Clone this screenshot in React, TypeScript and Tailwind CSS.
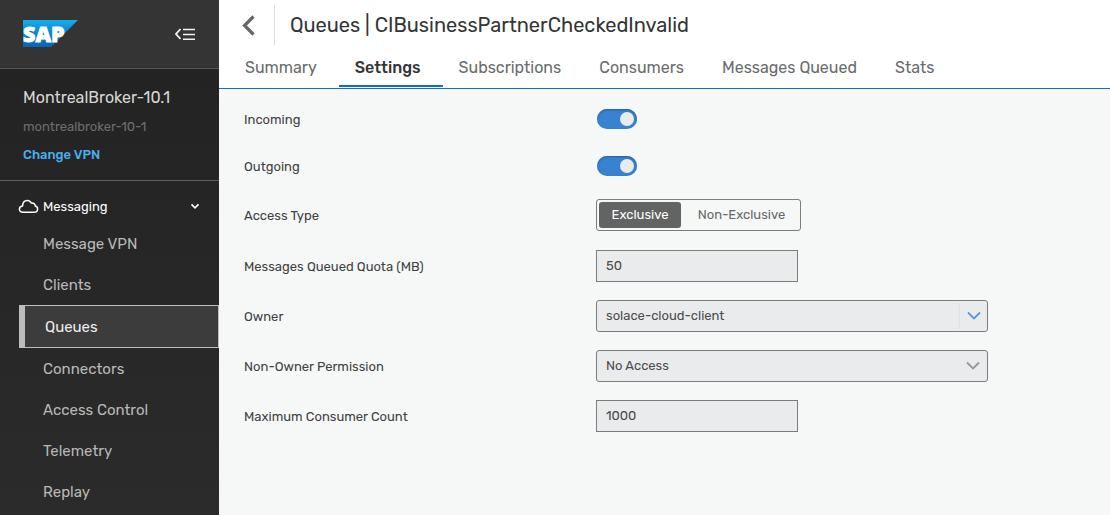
import { useState } from "react";
import type { ReactNode } from "react";

const navItems = ["Message VPN", "Clients", "Queues", "Connectors", "Access Control", "Telemetry", "Replay"];
const tabs = ["Summary", "Settings", "Subscriptions", "Consumers", "Messages Queued", "Stats"];

function SapLogo() {
  return (
    <svg width="55" height="27" viewBox="0 0 55 27" className="overflow-visible" role="img" aria-label="SAP">
      <defs>
        <linearGradient id="sap-blue" x1="0" y1="0" x2="0" y2="1">
          <stop offset="0" stopColor="#12aeec" />
          <stop offset="0.5" stopColor="#0c84d0" />
          <stop offset="1" stopColor="#0a62b4" />
        </linearGradient>
      </defs>
      <path d="M0 0H55L28 27H0Z" fill="url(#sap-blue)" />
      <text x="0" y="21.500" fill="#fff" stroke="#fff" strokeWidth="0.900" fontFamily="'Open Sans', sans-serif" fontWeight="800" fontSize="21.500">
        SAP
      </text>
    </svg>
  );
}

function Sidebar() {
  return (
    <aside className="flex w-[219px] shrink-0 flex-col bg-linear-to-b from-[#222222] to-[#2b2b2b]">
      <div className="flex h-[69px] items-center justify-between border-b border-[#565656] bg-[#343434] pr-6 pb-px pl-[23px]">
        <SapLogo />
        <button type="button" aria-label="Collapse navigation">
          <svg width="20" height="12" viewBox="0 0 20 12" fill="none" stroke="#f2f2f2">
            <path d="M5.500 1 1 6l4.500 5" strokeWidth="1.800" />
            <path d="M8 1.500h12M8 6.500h12M8 11.200h12" strokeWidth="1.600" />
          </svg>
        </button>
      </div>
      <div className="flex h-28 flex-col border-b border-[#606060] pt-[17px] pl-[23px]">
        <h2 className="text-[16px] leading-6 text-[#d6d6d6]">MontrealBroker-10.1</h2>
        <p className="mt-[7px] text-[13px] leading-5 text-[#6e6e6e]">montrealbroker-10-1</p>
        <a href="#vpn" className="mt-2 text-[13px] leading-5 font-medium text-[#46b0f0]">
          Change VPN
        </a>
      </div>
      <nav className="flex flex-col" aria-label="Messaging">
        <button type="button" className="flex h-[42px] items-center pt-2 pr-[19px] pl-[18px] text-[13px] text-white">
          <svg width="21" height="15" viewBox="0 0 21 15" fill="none" stroke="#fff" strokeWidth="1.500">
            <path d="M5 13.200C2.700 13.200 1.400 12 1.400 10.200c0-1.900 1.400-3.100 3.100-3.300C4.700 3.600 6.700 1.500 9.300 1.500c1.900 0 3.200 1 3.900 2.500 2.300-.4 4 .9 4.100 3 1.500.4 2.300 1.500 2.300 2.900 0 2-1.500 3.300-3.600 3.300Z" />
          </svg>
          <span className="ml-1 flex-1 pt-0.5 text-left">Messaging</span>
          <svg width="10" height="7" viewBox="0 0 10 7" fill="none" stroke="#fff" strokeWidth="1.700">
            <path d="m1.500 1.300 3.500 3.500 3.500-3.500" />
          </svg>
        </button>
        {navItems.map((item) =>
          item === "Queues" ? (
            <a
              key={item}
              href="#queues"
              aria-current="page"
              className="ml-[19px] flex h-[43px] items-center border border-l-6 border-[#bdbdbd] bg-[#3c3c3c] pt-0.5 pl-5 text-[15px] text-[#ececec]"
            >
              {item}
            </a>
          ) : (
            <a key={item} href="#nav" className="flex h-[41px] items-center pt-0.5 pl-[43px] text-[15px] text-[#b8b8b8]">
              {item}
            </a>
          ),
        )}
      </nav>
    </aside>
  );
}

function Row({ id, label, children }: { id: string; label: string; children: ReactNode }) {
  return (
    <div className="flex h-8 items-center">
      <label htmlFor={id} className="w-[352px] shrink-0 pt-0.5 text-[13px] text-[#3f4142]">
        {label}
      </label>
      {children}
    </div>
  );
}

function Toggle({ id }: { id: string }) {
  return (
    <input
      id={id}
      type="checkbox"
      role="switch"
      defaultChecked
      className="ml-px flex h-5 w-10 appearance-none items-center rounded-full bg-[#9a9a9a] px-[3px] shadow-[inset_0_1px_2px_#1f5f9f] before:size-3.5 before:rounded-full before:bg-[#eaebed] checked:justify-end checked:bg-[#3783d0]"
    />
  );
}

function Chevron({ className }: { className: string }) {
  return (
    <svg width="14" height="10" viewBox="0 0 14 10" fill="none" stroke="currentColor" strokeWidth="1.800" className={className}>
      <path d="m1 1.500 6 6 6-6" />
    </svg>
  );
}

function TextBox({ id, value }: { id: string; value: string }) {
  return (
    <input
      id={id}
      type="text"
      defaultValue={value}
      className="h-8 w-[202px] border border-[#7b7d7d] bg-[#eaebed] px-[9px] pb-0.5 text-[13px] text-[#4a4c4d]"
    />
  );
}

function AccessType() {
  const [selected, setSelected] = useState("Exclusive");
  return (
    <div id="access-type" role="group" aria-label="Access Type" className="flex h-8 gap-1 rounded-[3px] border border-[#7b7d7d] p-0.5 text-[13px]">
      {["Exclusive", "Non-Exclusive"].map((option) => (
        <button
          key={option}
          type="button"
          aria-pressed={selected === option}
          onClick={() => setSelected(option)}
          className="min-w-[82px] rounded-[3px] px-2 text-[#666868] not-first:min-w-[113px] aria-pressed:bg-[#626463] aria-pressed:text-white"
        >
          {option}
        </button>
      ))}
    </div>
  );
}

export default function App() {
  return (
    <div className="flex h-screen overflow-hidden font-[Rubik,Roboto,sans-serif]">
      <Sidebar />
      <main className="flex min-w-0 flex-1 flex-col bg-[#f6f8f8]">
        <header className="border-b border-[#0a6ed1] bg-white">
          <div className="flex h-[50px] items-end pb-[5px] pl-[22px]">
            <button type="button" aria-label="Back" className="flex h-10 w-[33px] items-center">
              <svg width="15" height="21" viewBox="0 0 15 21" fill="none" stroke="#666" strokeWidth="3.200">
                <path d="m12.500 1.500-9 9 9 9" />
              </svg>
            </button>
            <h1 className="flex h-10 items-center border-l border-[#dedede] pl-[15px] text-[20px] text-[#333536]">
              Queues | CIBusinessPartnerCheckedInvalid
            </h1>
          </div>
          <nav className="flex h-[38px] pl-2.5" aria-label="Queue">
            {tabs.map((tab) => (
              <a
                key={tab}
                href="#tab"
                aria-current={tab === "Settings" ? "page" : undefined}
                className="mb-px flex items-center border-b-2 border-transparent pr-[22px] pl-4 text-[16px] text-[#6a6c6d] aria-[current=page]:border-[#0a6ed1] aria-[current=page]:font-medium aria-[current=page]:text-[#333536]"
              >
                {tab}
              </a>
            ))}
          </nav>
        </header>
        <form className="flex flex-col pt-3.5 pl-[25px]">
          <div className="flex flex-col gap-[15px]">
            <Row id="incoming" label="Incoming">
              <Toggle id="incoming" />
            </Row>
            <Row id="outgoing" label="Outgoing">
              <Toggle id="outgoing" />
            </Row>
          </div>
          <div className="mt-[17px]">
            <Row id="access-type" label="Access Type">
              <AccessType />
            </Row>
          </div>
          <div className="mt-[19px] flex flex-col gap-[18px]">
            <Row id="quota" label="Messages Queued Quota (MB)">
              <TextBox id="quota" value="50" />
            </Row>
            <Row id="owner" label="Owner">
              <div className="flex h-8 w-[392px] items-center rounded-[3px] border border-[#7b7d7d] bg-[#eaebed]">
                <input id="owner" type="text" defaultValue="solace-cloud-client" className="min-w-0 flex-1 px-[9px] text-[13px] text-[#4a4c4d]" />
                <button type="button" aria-label="Show owners" className="flex h-[26px] w-7 items-center justify-center border-l border-[#dfe1e2]">
                  <Chevron className="text-[#5a97d6]" />
                </button>
              </div>
            </Row>
            <Row id="permission" label="Non-Owner Permission">
              <div className="grid h-8 w-[392px] items-center">
                <select
                  id="permission"
                  className="col-start-1 row-start-1 h-8 w-full appearance-none rounded-[3px] border border-[#7b7d7d] bg-[#eaebed] px-[9px] text-[13px] text-[#4a4c4d]"
                >
                  <option>No Access</option>
                </select>
                <Chevron className="pointer-events-none col-start-1 row-start-1 mr-2 justify-self-end text-[#959799]" />
              </div>
            </Row>
            <Row id="max-consumers" label="Maximum Consumer Count">
              <TextBox id="max-consumers" value="1000" />
            </Row>
          </div>
        </form>
      </main>
    </div>
  );
}
